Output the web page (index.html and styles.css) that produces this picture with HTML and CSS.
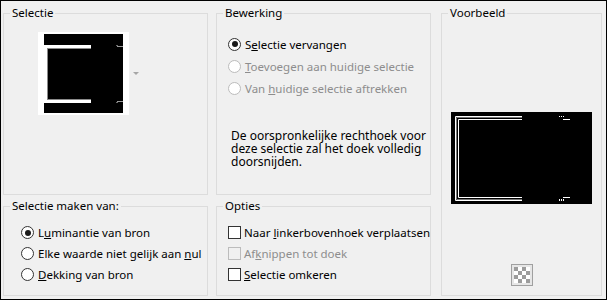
FILE: index.html
```html
<!DOCTYPE html>
<html lang="nl">
<head>
    <meta charset="UTF-8">
    <title>Selectie uit masker</title>
    <link rel="stylesheet" href="styles.css">
</head>
<body>
    <div class="window">
        <fieldset class="group selectie">
            <legend>Selectie</legend>
            <div class="source">
                <svg class="thumb" width="91" height="83" viewBox="0 0 91 83">
                    <rect x="0" y="0" width="91" height="83" fill="#fff"/>
                    <rect x="6" y="2" width="79" height="79" fill="#000"/>
                    <rect x="6" y="13" width="47" height="3" fill="#fff"/>
                    <rect x="9" y="16" width="44" height="1" fill="#8a8a8a"/>
                    <rect x="6" y="68" width="47" height="3" fill="#fff"/>
                    <rect x="9" y="67" width="44" height="1" fill="#8a8a8a"/>
                    <rect x="6" y="13" width="3" height="58" fill="#fff"/>
                    <rect x="9" y="16" width="1" height="52" fill="#8a8a8a"/>
                    <rect x="79" y="14" width="6" height="1" fill="#9a9a9a"/>
                    <rect x="78" y="13" width="2" height="1" fill="#6a6a6a"/>
                    <rect x="79" y="69" width="6" height="1" fill="#9a9a9a"/>
                    <rect x="78" y="70" width="2" height="1" fill="#6a6a6a"/>
                </svg>
                <span class="drop-arrow"></span>
            </div>
        </fieldset>

        <fieldset class="group bewerking">
            <legend>Bewerking</legend>
            <label class="option"><span class="radio checked"></span><span>S<u>e</u>lectie vervangen</span></label>
            <label class="option disabled"><span class="radio"></span><span><u>T</u>oevoegen aan huidige selectie</span></label>
            <label class="option disabled"><span class="radio"></span><span>Van <u>h</u>uidige selectie aftrekken</span></label>
            <p class="note">De oorspronkelijke rechthoek voor<br>deze selectie zal het doek volledig<br>doorsnijden.</p>
        </fieldset>

        <fieldset class="group voorbeeld">
            <legend>Voorbeeld</legend>
            <svg class="preview" width="141" height="92" viewBox="0 0 141 92">
                <rect x="0" y="0" width="141" height="92" fill="#000"/>
                <g fill="none" stroke-width="1">
                    <path d="M71 4.5H4.5V88.5H71" stroke="#fff"/>
                    <path d="M71 5.5H5.5V87.5H71" stroke="#777"/>
                    <path d="M71 7.5H7.5V85.5H71" stroke="#fff"/>
                </g>
                <g fill="#fff">
                    <rect x="108" y="4" width="1" height="1"/>
                    <rect x="110" y="4" width="1" height="1"/>
                    <rect x="112" y="4" width="1" height="1"/>
                    <rect x="112" y="7" width="1" height="1"/>
                    <rect x="113" y="7" width="6" height="1"/>
                    <rect x="113" y="85" width="6" height="1"/>
                    <rect x="112" y="85" width="1" height="1"/>
                    <rect x="108" y="87" width="1" height="2"/>
                    <rect x="110" y="87" width="1" height="2"/>
                    <rect x="112" y="87" width="1" height="2"/>
                </g>
            </svg>
            <svg class="checker" width="22" height="22" viewBox="0 0 22 22">
                <rect x="0.5" y="0.5" width="21" height="21" fill="#e6e6e6" stroke="#a0a0a0"/>
                <rect x="3" y="3" width="16" height="16" fill="#fff"/>
                <g fill="#9c9c9c">
                    <rect x="3" y="3" width="4" height="4"/>
                    <rect x="11" y="3" width="4" height="4"/>
                    <rect x="7" y="7" width="4" height="4"/>
                    <rect x="15" y="7" width="4" height="4"/>
                    <rect x="3" y="11" width="4" height="4"/>
                    <rect x="11" y="11" width="4" height="4"/>
                    <rect x="7" y="15" width="4" height="4"/>
                    <rect x="15" y="15" width="4" height="4"/>
                </g>
            </svg>
        </fieldset>

        <fieldset class="group maken">
            <legend>Selectie maken van:</legend>
            <label class="option"><span class="radio checked"></span><span>L<u>u</u>minantie van bron</span></label>
            <label class="option"><span class="radio"></span><span>Elke waarde niet gelijk aan <u>n</u>ul</span></label>
            <label class="option"><span class="radio"></span><span><u>D</u>ekking van bron</span></label>
        </fieldset>

        <fieldset class="group opties">
            <legend>Opties</legend>
            <label class="option"><span class="check"></span><span>Naar <u>l</u>inkerbovenhoek verplaatsen</span></label>
            <label class="option disabled"><span class="check"></span><span>Af<u>k</u>nippen tot doek</span></label>
            <label class="option"><span class="check"></span><span><u>S</u>electie omkeren</span></label>
        </fieldset>
    </div>
</body>
</html>
```

FILE: styles.css
```css
body {
    margin: 0;
    font-family: "Noto Sans", "DejaVu Sans", sans-serif;
    font-size: 11.5px;
    color: #000;
}
.window {
    box-sizing: border-box;
    width: 607px;
    height: 300px;
    border: 1px solid #000;
    background: #f0f0f0;
    padding: 5px 0 0 2px;
    display: grid;
    grid-template-columns: 205px 215px 163px;
    grid-template-rows: 189px 97px;
    column-gap: 8px;
    row-gap: 4px;
}
.group {
    margin: 0;
    padding: 0;
    min-width: 0;
    border: 1px solid #dcdcdc;
    display: flex;
    flex-direction: column;
}
.group legend {
    margin-left: 6px;
    padding: 0 2px;
    line-height: 14px;
    height: 14px;
}
.voorbeeld {
    grid-column: 3;
    grid-row: 1 / span 2;
    margin-left: 2px;
    align-items: center;
}

/* source thumbnail */
.source {
    display: flex;
    align-items: center;
    padding: 12px 0 0 34px;
}
.thumb { display: block; }
.drop-arrow {
    margin-left: 4px;
    width: 0;
    height: 0;
    border-left: 3px solid transparent;
    border-right: 3px solid transparent;
    border-top: 3px solid #a6a6a6;
}

/* radio / check rows */
.option {
    display: flex;
    align-items: center;
    height: 22px;
    white-space: nowrap;
}
.option.disabled { color: #8d8d8d; }
.radio, .check {
    box-sizing: border-box;
    width: 13px;
    height: 13px;
    margin-right: 4px;
    flex: none;
    background: #fff;
    border: 1px solid #333;
}
.radio {
    border-radius: 50%;
    position: relative;
}
.radio.checked::after {
    content: "";
    position: absolute;
    left: 2.5px;
    top: 2.5px;
    width: 6px;
    height: 6px;
    border-radius: 50%;
    background: #1a1a1a;
}
.check { margin-right: 3px; }
.disabled .radio, .disabled .check {
    border-color: #bcbcbc;
}
.disabled .check { background: #f0f0f0; }

.bewerking { padding: 13px 0 0 11px; }
.bewerking legend { margin-left: -5px; }
.note {
    margin: 30px 0 0 3px;
    font-size: 12px;
    line-height: 13px;
}

.maken { padding: 9px 0 0 17px; }
.maken legend { margin-left: -11px; }
.maken .option, .opties .option { height: 21px; }
.opties { padding: 9px 0 0 11px; }
.opties legend { margin-left: -5px; }

.preview { margin-top: 92px; display: block; }
.checker { margin-top: auto; margin-bottom: 9px; display: block; }
```
